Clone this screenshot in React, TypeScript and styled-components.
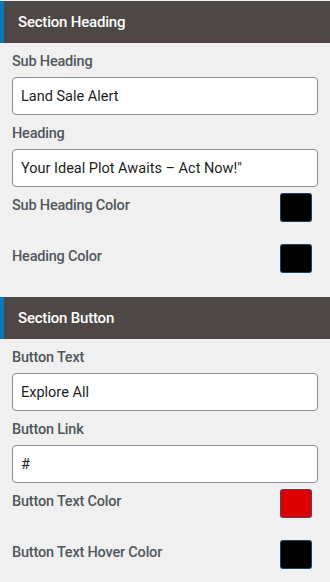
import styled, { createGlobalStyle } from "styled-components";

const GlobalStyle = createGlobalStyle`
  html, body {
    margin: 0;
    padding: 0;
    background: #f0f0f0;
  }
  * { box-sizing: border-box; }
`;

const Panel = styled.div`
  width: 330px;
  padding-top: 1px;
  font-family: Roboto, "Liberation Sans", sans-serif;
  background: #f0f0f0;
`;

const SectionHeader = styled.div`
  height: 42px;
  display: flex;
  align-items: center;
  padding-left: 14px;
  background: #4d4846;
  border-left: 4px solid #0a78b8;
  color: #ffffff;
  font-size: 15px;
  font-weight: 500;
  letter-spacing: -0.2px;
`;

const Body = styled.div`
  padding: 9px 12px 24px 12px;
`;

const Label = styled.div`
  color: #50575e;
  font-size: 14.5px;
  font-weight: 500;
  line-height: 20px;
  letter-spacing: -0.2px;
`;

const Field = styled.div`
  display: flex;
  flex-direction: column;
  gap: 5px;
  margin-bottom: 9px;
`;

const TextInput = styled.input`
  width: 306px;
  height: 38px;
  padding: 0 8px;
  border: 1px solid #8c8f94;
  border-radius: 4px;
  background: #ffffff;
  color: #1e1e1e;
  font-family: Roboto, "Liberation Sans", sans-serif;
  font-size: 14.5px;
  outline: none;
`;

const ColorRow = styled.div`
  display: flex;
  justify-content: space-between;
  align-items: flex-start;
  padding-right: 6px;
  height: 51px;
  margin-top: -3px;
  & + & {
    margin-top: 0;
  }
  &:last-child {
    height: 29px;
  }
`;

const ColorLabel = styled(Label)`
  margin-top: 3px;
`;

const Swatch = styled.div<{ $color: string }>`
  width: 32px;
  height: 29px;
  border-radius: 3px;
  background: ${(p) => p.$color};
  border: 1px solid rgba(40, 90, 140, 0.7);
`;

type TextField = { label: string; value: string };
type ColorField = { label: string; color: string };

const sections: { title: string; fields: TextField[]; colors: ColorField[] }[] = [
  {
    title: "Section Heading",
    fields: [
      { label: "Sub Heading", value: "Land Sale Alert" },
      { label: "Heading", value: "Your Ideal Plot Awaits – Act Now!\"" },
    ],
    colors: [
      { label: "Sub Heading Color", color: "#000000" },
      { label: "Heading Color", color: "#000000" },
    ],
  },
  {
    title: "Section Button",
    fields: [
      { label: "Button Text", value: "Explore All" },
      { label: "Button Link", value: "#" },
    ],
    colors: [
      { label: "Button Text Color", color: "#dd0000" },
      { label: "Button Text Hover Color", color: "#000000" },
    ],
  },
];

export default function App() {
  return (
    <>
      <GlobalStyle />
      <Panel>
        {sections.map((s) => (
          <div key={s.title}>
            <SectionHeader>{s.title}</SectionHeader>
            <Body>
              {s.fields.map((f) => (
                <Field key={f.label}>
                  <Label>{f.label}</Label>
                  <TextInput defaultValue={f.value} />
                </Field>
              ))}
              {s.colors.map((c) => (
                <ColorRow key={c.label}>
                  <ColorLabel>{c.label}</ColorLabel>
                  <Swatch $color={c.color} />
                </ColorRow>
              ))}
            </Body>
          </div>
        ))}
      </Panel>
    </>
  );
}
